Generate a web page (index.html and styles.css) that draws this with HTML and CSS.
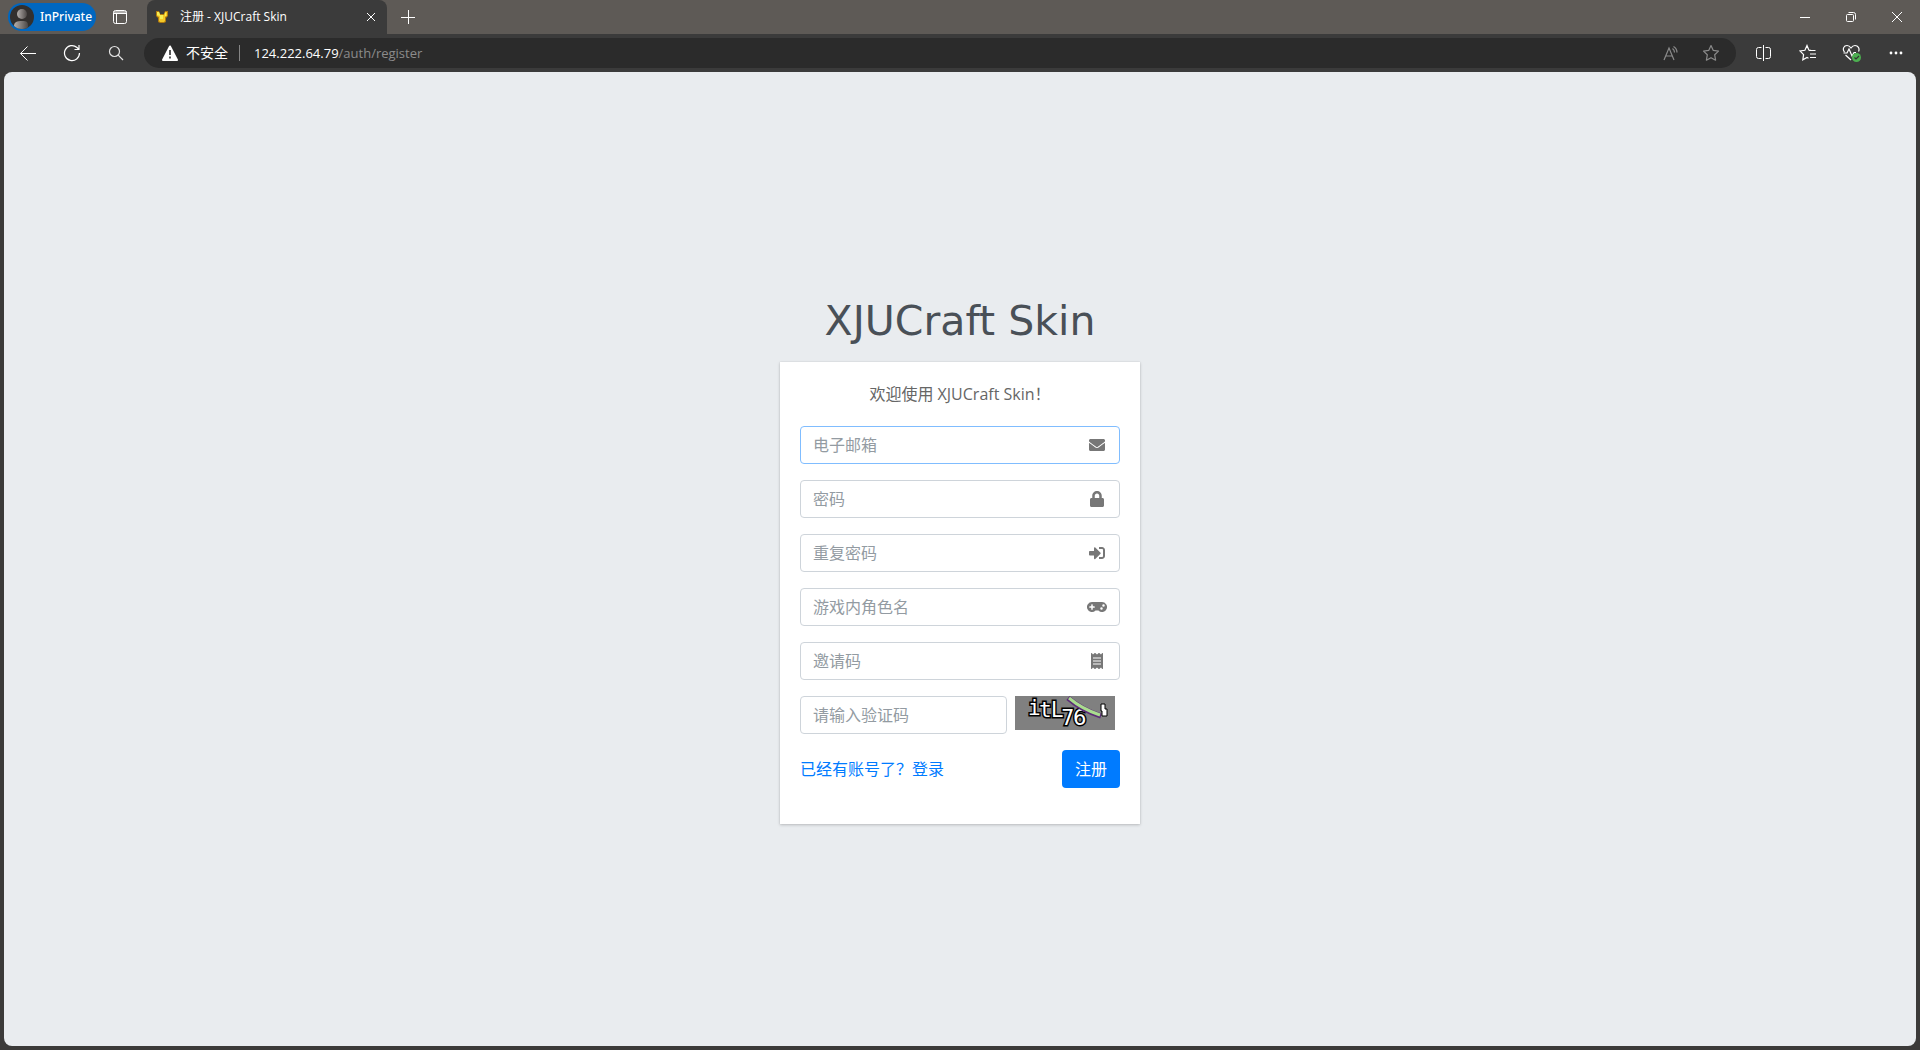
FILE: index.html
```html
<!DOCTYPE html>
<html lang="zh-CN">
<head>
<meta charset="utf-8">
<meta name="viewport" content="width=device-width, initial-scale=1">
<title>注册 - XJUCraft Skin</title>
<link rel="stylesheet" href="styles.css">
</head>
<body>
<div class="browser">
  <header class="titlebar">
    <button class="profile" type="button">
      <svg width="24" height="24" viewBox="0 0 24 24" aria-hidden="true">
        <defs>
          <linearGradient id="shade" x1="0" x2="1"><stop offset="0" stop-color="#b5b0ad"/><stop offset="1" stop-color="#4c4846"/></linearGradient>
          <clipPath id="round"><circle cx="12" cy="12" r="12"/></clipPath>
        </defs>
        <circle cx="12" cy="12" r="12" fill="#33302e"/>
        <g clip-path="url(#round)" fill="url(#shade)"><circle cx="12" cy="9" r="5"/><path d="M4 25v-4c0-4 3-5 8-5s6 1 6 5v4z"/></g>
      </svg>
      <span>InPrivate</span>
    </button>
    <button class="workspace" type="button" aria-label="标签页操作">
      <svg width="16" height="16" viewBox="0 0 16 16" fill="none" stroke="#fff" aria-hidden="true"><rect x="1.5" y="1.5" width="13" height="13" rx="2"/><path d="M1.5 3h13M1.5 4.5h13M4.500 5v9"/></svg>
    </button>
    <div class="tab">
      <svg class="favicon" width="14" height="14" viewBox="0 0 14 14" aria-hidden="true"><path d="M1 1h3l1 3h4l1-3h3v5l-2 2v4l-2 1H5l-2-1V8L1 6z" fill="#b07a10"/><path d="M2 2h2l1 3h4l1-3h2v4l-2 1v4l-1 1H5l-1-1V7L2 6z" fill="#f4c928"/><path d="M2 2h2l1 3h3v4H5V6L2 5zM10 3h1v3h-1z" fill="#f5ee55"/></svg>
      <span class="tab-title">注册 - XJUCraft Skin</span>
      <button class="tab-close" type="button" aria-label="关闭标签页"><svg width="10" height="10" viewBox="0 0 10 10" stroke="#fff" aria-hidden="true"><path d="M1 1l8 8M9 1L1 9"/></svg></button>
    </div>
    <button class="new-tab" type="button" aria-label="新建标签页"><svg width="14" height="14" viewBox="0 0 14 14" stroke="#fff" aria-hidden="true"><path d="M0 7.500h14M7.500 0v14"/></svg></button>
    <div class="window-controls">
      <button type="button" aria-label="最小化"><svg width="10" height="10" viewBox="0 0 10 10" stroke="#fff" aria-hidden="true"><path d="M0 5.500h10"/></svg></button>
      <button type="button" aria-label="还原"><svg width="10" height="10" viewBox="0 0 10 10" fill="none" stroke="#fff" aria-hidden="true"><rect x=".5" y="2.500" width="7" height="7" rx="1"/><path d="M2.500.500h5a2 2 0 0 1 2 2v5"/></svg></button>
      <button type="button" aria-label="关闭"><svg width="10" height="10" viewBox="0 0 10 10" stroke="#fff" aria-hidden="true"><path d="M0 0l10 10M10 0L0 10"/></svg></button>
    </div>
  </header>

  <nav class="toolbar" aria-label="导航">
    <div class="tools">
      <button type="button" aria-label="后退"><svg width="18" height="18" viewBox="0 0 18 18" fill="none" stroke="#fff" aria-hidden="true"><path d="M17 9.500H1.500M8.500 2.500l-7 7 7 7"/></svg></button>
      <button type="button" aria-label="刷新"><svg width="18" height="18" viewBox="0 0 18 18" fill="none" stroke="#fff" stroke-width="1.200" aria-hidden="true"><path d="M16.500 9A7.500 7.500 0 1 1 14 3.500l2 2M16 1v4.500h-4.500"/></svg></button>
      <button type="button" aria-label="搜索"><svg width="16" height="16" viewBox="0 0 16 16" fill="none" stroke="#e4e4e4" stroke-width="1.200" aria-hidden="true"><circle cx="6.500" cy="6.500" r="5"/><path d="M10.200 10.200L15 15"/></svg></button>
    </div>
    <div class="address">
      <svg width="16" height="16" viewBox="0 0 16 16" aria-hidden="true"><path d="M8 1.500L15 15H1z" fill="#fff" stroke="#fff" stroke-width="2" stroke-linejoin="round"/><path d="M8 5v5M8 11.500v2" stroke="#2b2b2b" stroke-width="1.600"/></svg>
      <span class="security">不安全</span>
      <div class="url" role="textbox" aria-label="地址栏">124.222.64.79<span class="path">/auth/register</span></div>
      <button type="button" aria-label="大声朗读"><svg width="16" height="16" viewBox="0 0 16 16" fill="none" stroke="#8b8b8b" stroke-width="1.200" aria-hidden="true"><path d="M1 15L6 3l5 12M2.700 11h6.600M9.500 3.500q2 1.500 2 4M10.500 1.500q3.500 2 3.500 6"/></svg></button>
      <button type="button" aria-label="收藏此页"><svg width="18" height="18" viewBox="0 0 18 18" fill="none" stroke="#8b8b8b" stroke-width="1.200" stroke-linejoin="round" aria-hidden="true"><path d="M9 1.500l2.300 4.900 5.200.7-3.800 3.700.9 5.400L9 13.700l-4.600 2.500.9-5.400L1.500 7.100l5.200-.7z"/></svg></button>
    </div>
    <div class="tools">
      <button type="button" aria-label="分屏"><svg width="16" height="16" viewBox="0 0 16 16" fill="none" stroke="#fff" aria-hidden="true"><path d="M5.500 2.500h-3q-2 0-2 2v7q0 2 2 2h3M9.500 2.500h3q2 0 2 2v7q0 2-2 2h-3M7.500 0v16"/></svg></button>
      <button type="button" aria-label="收藏夹"><svg width="18" height="18" viewBox="0 0 18 18" fill="none" stroke="#fff" stroke-width="1.200" aria-hidden="true"><path d="M10 6.500h6.500M11 10h6M11 13.500h6M12 6.300L9.800 6 8 1.500 5.900 6.300 1 7l3.600 3.600-.8 5.200L8 13.500l1.500.8"/></svg></button>
      <button type="button" aria-label="浏览器概要"><svg width="20" height="18" viewBox="0 0 20 18" fill="none" stroke="#fff" stroke-width="1.200" aria-hidden="true"><path d="M2.500 8C0 5 2 1.500 5 1.500c2 0 3 1 4 2.500 1-1.500 2-2.500 4-2.500 3 0 5 3 3.500 6M1.500 9H5l2-4 3 7 2-3.500h2M3.500 11L9 16"/><circle cx="14.500" cy="13.500" r="4.500" fill="#4caf50" stroke="none"/><path d="M12.500 13.500l1.500 1.500 3-3" stroke="#333"/></svg></button>
      <button type="button" aria-label="更多"><svg width="14" height="4" viewBox="0 0 14 4" fill="#fff" aria-hidden="true"><circle cx="2" cy="2" r="1.400"/><circle cx="7" cy="2" r="1.400"/><circle cx="12" cy="2" r="1.400"/></svg></button>
    </div>
  </nav>

  <main class="page">
    <div class="register-box">
      <h1 class="logo">XJUCraft Skin</h1>
      <section class="card">
        <p class="message">欢迎使用 XJUCraft Skin！</p>
        <form>
          <label class="field active">
            <input type="email" placeholder="电子邮箱" aria-label="电子邮箱">
            <span class="icon"><svg width="16" height="16" viewBox="0 0 512 512" aria-hidden="true"><path d="M502.300 190.800c3.900-3.100 9.700-.2 9.700 4.700V400c0 26.500-21.500 48-48 48H48c-26.500 0-48-21.500-48-48V195.600c0-5 5.700-7.800 9.700-4.700 22.400 17.400 52.100 39.500 154.100 113.600 21.100 15.400 56.700 47.800 92.200 47.600 35.700.3 72-32.800 92.300-47.600 102-74.100 131.600-96.300 154-113.700zM256 320c23.200.4 56.600-29.200 73.400-41.400 132.700-96.300 142.800-104.700 173.400-128.700 5.800-4.500 9.200-11.500 9.200-18.900v-19c0-26.500-21.500-48-48-48H48c-26.500 0-48 21.500-48 48v19c0 7.400 3.400 14.300 9.200 18.900 30.600 23.900 40.700 32.400 173.400 128.700 16.800 12.200 50.200 41.800 73.400 41.400z"/></svg></span>
          </label>
          <label class="field">
            <input type="password" placeholder="密码" aria-label="密码">
            <span class="icon"><svg width="14" height="16" viewBox="0 0 448 512" aria-hidden="true"><path d="M400 224h-24v-72C376 68.200 307.800 0 224 0S72 68.200 72 152v72H48c-26.500 0-48 21.500-48 48v192c0 26.500 21.500 48 48 48h352c26.500 0 48-21.500 48-48V272c0-26.500-21.500-48-48-48zm-104 0H152v-72c0-39.700 32.300-72 72-72s72 32.300 72 72v72z"/></svg></span>
          </label>
          <label class="field">
            <input type="password" placeholder="重复密码" aria-label="重复密码">
            <span class="icon"><svg width="16" height="16" viewBox="0 0 512 512" aria-hidden="true"><path d="M416 448h-84c-6.600 0-12-5.400-12-12v-40c0-6.600 5.400-12 12-12h84c17.700 0 32-14.300 32-32V160c0-17.700-14.300-32-32-32h-84c-6.600 0-12-5.400-12-12V76c0-6.600 5.400-12 12-12h84c53 0 96 43 96 96v192c0 53-43 96-96 96zm-47-201L201 79c-15-15-41-4.500-41 17v96H24c-13.300 0-24 10.700-24 24v96c0 13.300 10.700 24 24 24h136v96c0 21.500 26 32 41 17l168-168c9.300-9.400 9.300-24.600 0-34z"/></svg></span>
          </label>
          <label class="field">
            <input type="text" placeholder="游戏内角色名" aria-label="游戏内角色名">
            <span class="icon"><svg width="20" height="16" viewBox="0 0 640 512" aria-hidden="true"><path d="M480 96H160a160 160 0 1 0 114.240 272h91.500A160 160 0 1 0 480 96zM248 268a12 12 0 0 1-12 12h-52v52a12 12 0 0 1-12 12h-24a12 12 0 0 1-12-12v-52H84a12 12 0 0 1-12-12v-24a12 12 0 0 1 12-12h52v-52a12 12 0 0 1 12-12h24a12 12 0 0 1 12 12v52h52a12 12 0 0 1 12 12zm216 76a40 40 0 1 1 40-40 40 40 0 0 1-40 40zm64-96a40 40 0 1 1 40-40 40 40 0 0 1-40 40z"/></svg></span>
          </label>
          <label class="field">
            <input type="text" placeholder="邀请码" aria-label="邀请码">
            <span class="icon"><svg width="12" height="16" viewBox="0 0 384 512" aria-hidden="true"><path fill-rule="evenodd" d="M358.400 3.200L320 48 265.600 3.200a15.900 15.900 0 0 0-19.200 0L192 48 137.600 3.200a15.900 15.900 0 0 0-19.200 0L64 48 25.600 3.200C15-4.700 0 2.800 0 16v480c0 13.200 15 20.700 25.600 12.800L64 464l54.400 44.800a15.900 15.900 0 0 0 19.200 0L192 464l54.400 44.800a15.900 15.900 0 0 0 19.200 0L320 464l38.400 44.800c10.500 7.900 25.600.4 25.600-12.800V16c0-13.200-15-20.700-25.600-12.800zM64 144h256v32H64zM64 240h256v32H64zM64 336h256v32H64z"/></svg></span>
          </label>
          <div class="captcha-row">
            <label class="field">
              <input type="text" placeholder="请输入验证码" aria-label="请输入验证码">
            </label>
            <svg class="captcha" width="100" height="34" viewBox="0 0 100 34" role="img" aria-label="验证码">
              <rect width="100" height="34" fill="#808080"/>
              <g class="captcha-text">
                <text class="mono" x="13" y="19">i</text><text class="mono" x="24" y="21">t</text><text x="36" y="21">L</text><text x="46" y="29">7</text><text x="58" y="29">6</text>
              </g>
              <path d="M53 2q14 12 33 18" fill="none" stroke="#5c2b78" stroke-width="5"/>
              <path d="M54 2q13 11 31 17" fill="none" stroke="#a9dc8e" stroke-width="3"/>
              <path d="M86 8h4v5h2v7h-5v-5h-1z" fill="#fff" stroke="#000"/>
            </svg>
          </div>
          <div class="actions">
            <a href="#login">已经有账号了？登录</a>
            <button class="submit" type="submit">注册</button>
          </div>
        </form>
      </section>
    </div>
  </main>
</div>
</body>
</html>
```
FILE: styles.css
```css
* { box-sizing: border-box; }

body {
  margin: 0;
  background: #3b3a39;
  font-family: "Open Sans", "Noto Sans CJK SC", sans-serif;
  font-size: 16px;
  line-height: 24px;
}

button, input { font: inherit; }

button {
  display: flex;
  align-items: center;
  justify-content: center;
  padding: 0;
  border: 0;
  background: none;
  color: inherit;
}

svg { display: block; flex: none; }

.browser {
  display: flex;
  flex-direction: column;
  min-height: 100vh;
}

/* Title bar */
.titlebar {
  display: flex;
  align-items: center;
  height: 34px;
  padding-left: 8px;
  background: #5e5a56;
  color: #fff;
  font-size: 12px;
  line-height: 16px;
}

.profile {
  justify-content: flex-start;
  gap: 6px;
  width: 88px;
  height: 28px;
  padding-left: 2px;
  border-radius: 14px;
  background: #0067c0;
  font-family: "Noto Sans", sans-serif;
  font-weight: 500;
}

.workspace { width: 48px; height: 34px; }

.tab {
  display: flex;
  align-items: center;
  width: 240px;
  height: 34px;
  margin-left: 3px;
  padding: 0 11px 0 8px;
  border-radius: 8px 8px 0 0;
  background: #3b3b3b;
}

.tab-title { flex: 1; margin-left: 11px; white-space: nowrap; }
.new-tab { width: 42px; height: 34px; }
.window-controls { display: flex; margin-left: auto; }
.window-controls button { width: 46px; height: 34px; }

/* Toolbar */
.toolbar {
  display: flex;
  align-items: center;
  gap: 6px;
  height: 38px;
  padding: 0 2px 0 6px;
  background: #3b3b3b;
}

.tools { display: flex; }
.tools button { width: 44px; height: 30px; }

.address {
  display: flex;
  flex: 1;
  align-items: center;
  height: 30px;
  padding: 0 5px 0 18px;
  border-radius: 15px;
  background: #2b2b2b;
  color: #fff;
  font-size: 14px;
  line-height: 20px;
}

.address button { width: 40px; height: 30px; }
.security { margin-left: 8px; padding-right: 11px; border-right: 1px solid #858585; line-height: 16px; }
.url { flex: 1; margin-left: 14px; font-size: 13px; }
.path { color: #8b8b8b; }

/* Registration page */
.page {
  display: flex;
  flex: 1;
  align-items: center;
  justify-content: center;
  margin: 0 4px 4px;
  border-radius: 8px;
  background: #e9ecef;
}

.register-box { width: 360px; }

.logo {
  margin: 0 0 14px;
  color: #495057;
  font-family: "DejaVu Sans", sans-serif;
  font-size: 41px;
  font-weight: 400;
  line-height: 54px;
  text-align: center;
}

.card {
  padding: 20px 20px 36px;
  background: #fff;
  box-shadow: 0 0 1px rgba(0, 0, 0, .13), 0 1px 3px rgba(0, 0, 0, .2);
}

.message { margin: 0 0 20px; color: #666; font-size: 16px; text-align: center; }

.field {
  display: flex;
  align-items: center;
  height: 38px;
  margin-bottom: 16px;
  border: 1px solid #ced4da;
  border-radius: 4px;
  background: #fff;
}

.active { border-color: #80bdff; }

.field input {
  flex: 1;
  min-width: 0;
  height: 36px;
  padding: 0 12px;
  border: 0;
  outline: 0;
  background: none;
  color: #495057;
}

.field input::placeholder { color: #939ba2; opacity: 1; }

.icon {
  display: flex;
  justify-content: center;
  width: 20px;
  margin-right: 12px;
  fill: #777;
}

.captcha-row { display: flex; gap: 8px; padding-right: 5px; }
.captcha-row .field { flex: 1; min-width: 0; }

.captcha-text {
  fill: #fff;
  stroke: #000;
  stroke-width: 3px;
  paint-order: stroke;
  font-family: "DejaVu Sans", sans-serif;
  font-size: 21px;
}

.mono { font-family: "DejaVu Sans Mono", monospace; }

.actions { display: flex; align-items: center; justify-content: space-between; }
.actions a { color: #007bff; text-decoration: none; }

.submit {
  height: 38px;
  padding: 0 13px;
  border-radius: 4px;
  background: #007bff;
  color: #fff;
}
```
